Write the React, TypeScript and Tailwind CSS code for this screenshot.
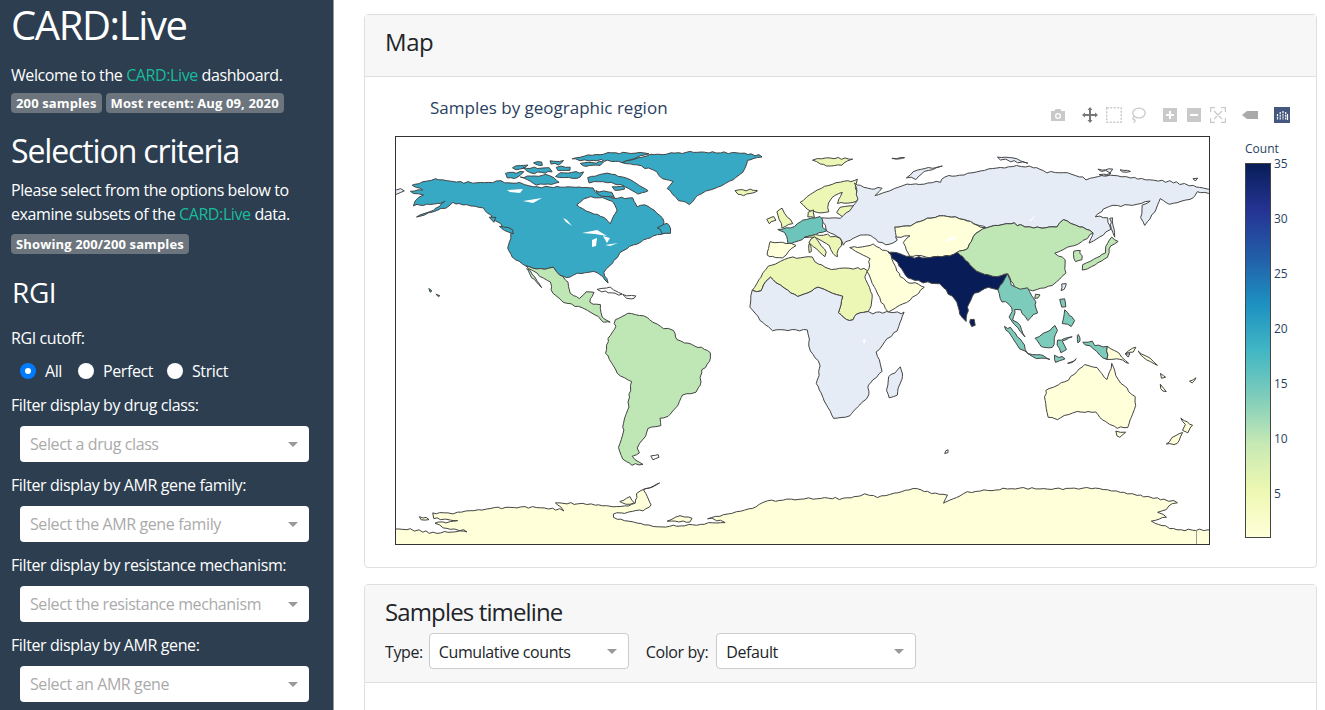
import React from "react";

const USA = "#37a9c5";
const TEAL = "#7ccbbb";
const FRANCE = "#6cc4bb";
const GREEN = "#bfe6b5";
const LIME = "#edf7b5";
const CREAM = "#ffffd9";
const NODATA = "#e5ecf6";
const NAVY = "#081d58";

// map shapes, in page pixels
const land: [string, string][] = [
  [USA, "412,185 423,182 435,179 457,182 480,183 500,181 505,183 520,183 533,187 553,187 575,187 593,188 595,192 603,195 613,198 632,198 637,207 645,204 663,218 664,225 661,229 670,233 657,235 647,238 638,243 630,247 620,252 617,258 607,268 603,272 608,283 603,277 598,272 577,273 570,278 560,275 553,268 537,269 525,266 513,258 508,247 512,230 503,227 493,218 483,208 467,205 453,203 445,208 432,212 417,217 433,210 445,202 427,205 413,205 415,200 423,195 410,192 423,190"],
  [USA, "587,177 607,173 623,177 640,185 649,190 638,194 625,186 607,182 590,182"],
  [USA, "520,177 550,175 560,183 537,185"],
  [USA, "505,173 523,172 518,178 508,178"],
  [USA, "572,158 607,153 648,153 623,162 597,160 580,161"],
  [USA, "580,163 603,162 600,165 582,166"],
  [USA, "512,167 527,165 524,169 516,170"],
  [USA, "523,168 550,168 552,172 530,173"],
  [USA, "557,167 570,167 569,170 558,171"],
  [USA, "560,173 583,172 580,178 572,178 556,177"],
  [USA, "550,161 563,161 562,164 552,164"],
  [USA, "533,162 542,161 543,165 535,165"],
  [USA, "596,191 612,192 615,197 600,196"],
  [USA, "613,187 623,186 624,190 615,190"],
  [USA, "657,227 668,223 671,233 662,233"],
  [USA, "490,217 495,218 493,222"],
  [USA, "500,226 512,229 513,234 505,231"],
  ["#ffffff", "577,205 587,197 602,198 613,201 617,210 612,220 610,224 605,218 590,212"],
  [USA, "623,163 650,155 690,152 740,153 762,156 747,160 743,172 730,182 710,190 697,195 690,204 678,200 668,188 673,182 663,178 653,170 637,165"],
  [USA, "428,289 432,291 430,292"],
  [USA, "436,294 440,296 438,297"],
  [NODATA, "390,188 404,190 398,194 390,194"],
  [LIME, "735,190 757,190 758,192 743,196 737,194"],
  [GREEN, "525,266 537,269 553,268 560,275 568,282 570,293 580,298 587,292 593,292 590,303 600,305 602,317 610,322 603,322 595,315 583,308 563,302 553,293 550,283 537,273"],
  [GREEN, "527,268 542,287 532,277"],
  ["#ffffff", "597,289 610,288 622,295 612,293 601,291"],
  ["#ffffff", "623,295 635,296 635,299 626,298"],
  [GREEN, "608,338 615,330 615,320 628,313 647,317 660,327 673,330 677,340 702,348 711,353 710,362 702,370 700,385 695,392 682,395 678,405 668,417 660,419 661,425 648,428 645,437 640,443 637,448 640,452 633,457 642,464 632,465 622,460 618,447 623,435 623,423 628,410 631,382 618,373 606,353"],
  ["#ffffff", "651,456 658,455 659,458 652,459"],
  [LIME, "776,212 783,208 787,217 793,223 782,227 779,220"],
  [LIME, "767,220 773,216 775,221 769,223"],
  [LIME, "800,202 817,190 840,182 858,180 855,187 859,198 852,203 838,203 843,192 835,195 828,203 828,212 818,213 807,209"],
  [LIME, "840,207 853,205 852,213 843,218 837,212"],
  [LIME, "808,212 813,210 815,217 808,217"],
  [FRANCE, "778,230 795,227 803,220 820,217 823,220 822,228 827,231 815,235 805,237 795,243 788,243 785,232"],
  [CREAM, "770,242 787,243 795,245 788,252 783,258 773,257 767,255 768,248"],
  [LIME, "805,237 815,235 827,235 840,238 842,245 837,250 838,257 833,253 830,245 818,238"],
  [LIME, "815,237 827,252 825,257 820,252 808,242"],
  [LIME, "809,245 811,245 811,252 809,252"],
  [LIME, "752,291 760,277 768,267 788,258 812,257 815,262 828,269 857,268 867,270 865,277 873,298 868,312 857,314 853,320 847,320 838,312 843,297 818,287 798,297 770,278 763,285 760,291"],
  [NODATA, "752,291 760,291 763,285 770,278 798,297 818,287 843,297 838,312 847,320 853,320 857,314 868,312 873,313 887,312 905,313 897,330 885,342 877,353 882,372 868,385 869,395 862,402 850,416 833,418 828,408 817,383 820,365 809,347 808,330 772,330 760,320 750,307"],
  [NODATA, "900,367 903,373 897,395 890,398 887,390 889,377"],
  [CREAM, "850,248 873,245 890,252 895,267 900,277 908,283 915,283 924,288 910,300 888,312 880,298 868,272 870,258"],
  [NODATA, "822,218 840,218 850,210 858,198 855,183 868,189 882,188 875,195 890,190 907,185 940,182 945,177 960,175 973,172 1013,166 1033,167 1047,172 1067,173 1087,179 1110,175 1150,180 1173,182 1208,189 1215,190 1215,194 1208,193 1197,192 1193,198 1170,204 1160,198 1155,212 1145,225 1141,217 1143,205 1150,201 1133,205 1110,206 1095,216 1108,218 1110,230 1100,237 1090,243 1093,232 1083,228 1063,220 1057,227 1033,228 1010,223 987,228 960,218 943,216 927,218 910,225 895,228 900,233 895,237 897,240 890,245 878,242 870,235 860,235 853,238 843,245 840,238 827,232"],
  [CREAM, "895,228 910,225 927,218 943,216 960,218 985,228 975,233 967,248 957,252 950,255 930,258 917,255 910,257 903,243 910,235 897,237"],
  [NAVY, "889,252 900,253 910,257 930,258 950,255 957,252 970,265 980,273 997,277 1008,274 1003,282 997,290 988,287 975,293 968,307 966,321 962,317 955,300 940,284 923,282 907,278 897,263 892,258"],
  [NAVY, "970,319 974,320 975,325 971,326"],
  [GREEN, "957,252 967,248 975,233 987,228 1010,223 1033,228 1057,227 1063,220 1083,228 1093,232 1087,238 1078,245 1067,248 1055,253 1065,260 1065,273 1053,285 1033,290 1017,290 1008,274 997,277 980,273 970,265"],
  [GREEN, "1073,252 1080,250 1082,260 1075,262"],
  [NODATA, "1062,284 1066,283 1064,290 1061,290"],
  [GREEN, "1035,294 1040,294 1038,298 1035,298"],
  [GREEN, "1083,265 1097,258 1105,252 1107,243 1112,238 1118,242 1110,245 1108,257 1095,265 1083,270"],
  [NODATA, "1110,218 1112,218 1115,237 1112,232"],
  [TEAL, "997,290 1003,282 1008,274 1012,285 1020,290 1027,288 1035,302 1037,312 1028,320 1020,310 1015,310 1013,320 1020,325 1025,337 1017,328 1010,318 1012,307 1005,302 1002,303"],
  [TEAL, "1004,327 1010,328 1023,342 1028,353 1020,348 1010,335"],
  [TEAL, "1028,354 1040,355 1050,359 1037,358"],
  [TEAL, "1035,338 1047,332 1055,325 1058,330 1055,338 1052,348 1042,347"],
  [TEAL, "1058,340 1072,337 1063,342 1067,350 1060,352 1058,345"],
  [TEAL, "1060,300 1065,298 1065,307 1062,308"],
  [TEAL, "1065,310 1075,320 1072,327 1063,323"],
  [TEAL, "1077,336 1079,335 1080,341 1078,342"],
  [TEAL, "1083,342 1092,342 1095,345 1107,347 1107,359 1100,355 1093,348 1085,345"],
  [CREAM, "1107,347 1115,350 1122,357 1129,364 1120,359 1112,360 1107,359"],
  [TEAL, "1054,356 1066,358 1056,362"],
  [TEAL, "1068,363 1077,358 1075,362"],
  [CREAM, "1125,353 1136,347 1133,352"],
  [CREAM, "1138,352 1150,358 1157,365 1147,360"],
  [CREAM, "1046,390 1065,382 1077,371 1085,365 1098,368 1107,380 1112,364 1118,380 1135,397 1135,410 1127,427 1117,428 1102,420 1095,412 1077,412 1057,419 1048,417 1045,400"],
  [CREAM, "1116,432 1125,432 1120,438"],
  [CREAM, "1180,418 1193,425 1188,433 1183,430 1185,425"],
  [CREAM, "1183,432 1177,444 1166,444 1175,435"],
  [CREAM, "1160,373 1165,378 1162,378"],
  [CREAM, "1190,381 1196,377 1192,383"],
  [CREAM, "1160,385 1167,391 1163,391"],
  ["#ffffff", "945,450 948,450 948,453 945,453"],
  [LIME, "813,160 830,158 852,159 841,165 827,166"],
  [NODATA, "892,158 905,158 898,160"],
  [NODATA, "907,177 917,170 943,166 925,171 915,179"],
  [NODATA, "997,158 1010,157 1027,163 1010,161"],
  [NODATA, "1098,170 1112,169 1110,172"],
  [NODATA, "1120,170 1130,171 1122,172"],
  [NODATA, "1100,175 1110,173 1108,176"],
  [NODATA, "1193,179 1198,179 1195,181"],
  [CREAM, "390,530 407,529 433,533 467,531 443,528 435,523 458,521 433,518 432,513 457,513 490,508 533,507 563,510 555,503 587,504 617,507 635,504 637,493 660,483 643,490 652,505 643,510 613,514 613,518 657,527 693,525 725,522 708,518 752,508 767,501 800,499 833,498 843,499 865,494 878,497 913,488 932,493 947,495 943,503 967,492 1020,488 1047,489 1095,488 1120,492 1177,502 1158,513 1167,517 1151,522 1177,530 1215,530 1215,552 390,552"],
  [CREAM, "620,502 630,497 635,503 626,504"],
  [CREAM, "667,521 680,516 692,518 690,522"],
  [CREAM, "419,517 426,518 428,520 422,520"],
  [NODATA, "1125,355 1130,354 1128,357"],
];

// lakes and inland seas, no outline
const lakes = [
  "507,190 523,189 520,193 510,192",
  "523,201 542,198 533,203",
  "563,218 567,220 572,226 566,222",
  "582,233 597,230 607,236 595,234",
  "592,240 597,238 596,246 592,247",
  "603,236 610,238 607,243",
  "605,245 618,243 610,246",
  "863,340 866,339 864,345",
  "945,240 955,236 958,237 948,242",
  "1030,222 1037,214 1030,220",
];

// wobble keyed on position, so that neighbours keep a shared border
function wobble(x: number, y: number): [number, number] {
  const dx = Math.sin(x * 1.7 + y * 0.9) * 0.6 + Math.sin(x * 0.6 - y * 1.3) * 0.4;
  const dy = Math.sin(x * 1.1 - y * 1.9) * 0.6 + Math.sin(x * 0.7 + y * 0.5) * 0.4;
  return [x + dx, y + dy];
}

function rough(points: string) {
  const pts = points.split(" ").map((p) => p.split(",").map(Number));
  const out: string[] = [];
  pts.forEach(([x, y], i) => {
    const [nx, ny] = pts[(i + 1) % pts.length];
    const n = Math.max(1, Math.round(Math.hypot(nx - x, ny - y) / 4));
    for (let k = 0; k < n; k++) {
      const [wx, wy] = wobble(x + ((nx - x) * k) / n, y + ((ny - y) * k) / n);
      out.push(`${wx.toFixed(1)},${wy.toFixed(1)}`);
    }
  });
  return out.join(" ");
}

function Caret() {
  return <span className="w-0 h-0 border-x-[5px] border-x-transparent border-t-[5px] border-t-[#999999] shrink-0" />;
}

function Badge({ children }: { children: React.ReactNode }) {
  return (
    <span className="inline-block h-[20px] px-[5px] rounded-[4px] bg-[#6c757d] text-white text-[13px] leading-[20px] font-bold tracking-[0.01em]">
      {children}
    </span>
  );
}

function Dropdown({ label, placeholder }: { label: string; placeholder: string }) {
  return (
    <div>
      <div className="h-[24px] leading-[24px] mt-[11px]">{label}</div>
      <div className="ml-[9px] mt-[9px] w-[289px] h-[36px] flex items-center justify-between bg-white rounded-[4px] pl-[10px] pr-[11px] text-[#aaaaaa]">
        <span>{placeholder}</span>
        <Caret />
      </div>
    </div>
  );
}

function Radio({ label, width, checked }: { label: string; width: string; checked?: boolean }) {
  return (
    <label className={`${width} flex items-center gap-[9px] h-[24px]`}>
      {checked ? (
        <span className="w-[16px] h-[16px] rounded-full bg-[#007bff] flex items-center justify-center">
          <span className="w-[6px] h-[6px] rounded-full bg-white" />
        </span>
      ) : (
        <span className="w-[16px] h-[16px] rounded-full bg-white" />
      )}
      <span>{label}</span>
    </label>
  );
}

function HeaderSelect({ value }: { value: string }) {
  return (
    <div className="w-[200px] h-[36px] flex items-center justify-between bg-white border border-[#cccccc] rounded-[4px] pl-[9px] pr-[11px]">
      <span className="pt-[1px]">{value}</span>
      <Caret />
    </div>
  );
}

function Modebar() {
  const c = "#c9c9c9";
  return (
    <div className="flex items-center mt-[9px] mr-[26px]">
      <svg width="16" height="16" viewBox="0 0 16 16" className="mr-[16px]">
        <path fill={c} fillRule="evenodd" d="M1 4h3.500l1-2h5l1 2H15v10H1zM8 6a3 3 0 1 0 0 6 3 3 0 0 0 0-6z" />
        <circle cx="8" cy="9" r="1.700" fill={c} />
      </svg>
      <svg width="16" height="16" viewBox="0 0 16 16" className="mr-[8px]">
        <path fill="#777777" d="M8 0l2.500 3H9v4h4V5.500L16 8l-3 2.500V9H9v4h1.500L8 16l-2.500-3H7V9H3v1.500L0 8l3-2.500V7h4V3H5.500z" />
      </svg>
      <svg width="16" height="16" viewBox="0 0 16 16" className="mr-[8px]">
        <rect x="0.750" y="0.750" width="14.500" height="14.500" fill="none" stroke={c} strokeWidth="1.500" strokeDasharray="2 1.500" />
      </svg>
      <svg width="16" height="16" viewBox="0 0 16 16" className="mr-[17px]">
        <ellipse cx="9" cy="6" rx="6.200" ry="4.800" fill="none" stroke={c} strokeWidth="1.300" />
        <path fill="none" stroke={c} strokeWidth="1.300" d="M4.500 9.500c-2 1-2 3-.500 3s1.500 2-.500 3" />
      </svg>
      <svg width="14" height="14" viewBox="0 0 14 14" className="mr-[10px]">
        <path fill={c} fillRule="evenodd" d="M0 0h14v14H0zM6 3v3H3v2h3v3h2V8h3V6H8V3z" />
      </svg>
      <svg width="14" height="14" viewBox="0 0 14 14" className="mr-[9px]">
        <path fill={c} fillRule="evenodd" d="M0 0h14v14H0zM3 6v2h8V6z" />
      </svg>
      <svg width="16" height="16" viewBox="0 0 16 16" className="mr-[16px]">
        <path fill="none" stroke={c} strokeWidth="1.200" d="M5 .600H.600V5M11 .600h4.400V5M5 15.400H.600V11M11 15.400h4.400V11M4 4l8 8M12 4l-8 8" />
      </svg>
      <svg width="16" height="10" viewBox="0 0 16 10" className="mr-[16px]">
        <path fill="#aaaaaa" d="M5 1h11v8H5L0 5z" />
      </svg>
      <svg width="16" height="16" viewBox="0 0 16 16">
        <rect width="16" height="16" fill="#44587f" />
        <path stroke="#ffffff" strokeWidth="1.200" d="M3.500 7v6M6.200 5v8M9 4v9M11.700 5v8" strokeDasharray="2 .8" />
        <path stroke="#ffffff" strokeWidth="1.200" d="M13.500 7v6" />
      </svg>
    </div>
  );
}

function Colorbar() {
  const ticks = ["35", "30", "25", "20", "15", "10", "5"];
  return (
    <div className="ml-[35px] mt-[6px] text-[12px] tracking-normal text-[#2a3f5f]">
      <div className="h-[21px] leading-[14px]">Count</div>
      <div className="flex">
        <div className="w-[26px] h-[375px] border border-[#444444] bg-[linear-gradient(to_bottom,#081d58,#253494_12.500%,#225ea8_25%,#1d91c0_37.500%,#41b6c4_50%,#7fcdbb_62.500%,#c7e9b4_75%,#edf8b1_87.500%,#ffffd9)]" />
        <div className="ml-[3px] -mt-[27px]">
          {ticks.map((t) => (
            <div key={t} className="h-[55px] leading-[55px]">{t}</div>
          ))}
        </div>
      </div>
    </div>
  );
}

function WorldMap() {
  return (
    <svg width="815" height="409" viewBox="395 136 815 409" className="shrink-0">
      <rect x="395.500" y="136.500" width="814" height="408" fill="#ffffff" />
      {land.map(([fill, points], i) => (
        <polygon key={i} points={rough(points)} fill={fill} stroke="#444444" strokeWidth="1" strokeLinejoin="round" />
      ))}
      {lakes.map((points, i) => (
        <polygon key={i} points={points} fill="#ffffff" />
      ))}
      <path d="M1196.500 530v14" stroke="#999999" />
      <rect x="395.500" y="136.500" width="814" height="408" fill="none" stroke="#333333" />
    </svg>
  );
}

export default function App() {
  return (
    <div className="h-screen flex overflow-hidden bg-white text-[16px] text-[#212529] font-['Open_Sans',sans-serif] tracking-[-0.025em]">
      <aside className="w-[334px] shrink-0 h-full bg-[#2c3e50] border-r border-[#999999] text-white pl-[11px]">
        <h1 className="text-[40px] leading-[48px] mt-[1px] tracking-[-0.035em]">CARD:Live</h1>
        <p className="mt-[14px] h-[24px] leading-[24px]">
          Welcome to the <span className="text-[#18bc9c]">CARD:Live</span> dashboard.
        </p>
        <div className="flex gap-[4px] mt-[6px]">
          <Badge>200 samples</Badge>
          <Badge>Most recent: Aug 09, 2020</Badge>
        </div>
        <h2 className="text-[32px] leading-[38px] mt-[19px] tracking-[-0.035em]">Selection criteria</h2>
        <p className="mt-[8px] leading-[24px]">
          Please select from the options below to
          <br />
          examine subsets of the <span className="text-[#18bc9c]">CARD:Live</span> data.
        </p>
        <div className="mt-[5px]">
          <Badge>Showing 200/200 samples</Badge>
        </div>
        <h3 className="text-[28px] leading-[34px] mt-[20px] ml-[1px]">RGI</h3>
        <div className="mt-[17px] h-[24px] leading-[24px]">RGI cutoff:</div>
        <div className="flex ml-[9px] mt-[9px] -mb-[1px]">
          <Radio label="All" width="w-[58px]" checked />
          <Radio label="Perfect" width="w-[89px]" />
          <Radio label="Strict" width="w-[80px]" />
        </div>
        <Dropdown label="Filter display by drug class:" placeholder="Select a drug class" />
        <Dropdown label="Filter display by AMR gene family:" placeholder="Select the AMR gene family" />
        <Dropdown label="Filter display by resistance mechanism:" placeholder="Select the resistance mechanism" />
        <Dropdown label="Filter display by AMR gene:" placeholder="Select an AMR gene" />
      </aside>

      <main className="flex-1 min-w-0 pl-[30px] pr-[8px] pt-[14px]">
        <section className="border border-[#dfdfdf] rounded-[4px] h-[554px]">
          <header className="h-[62px] bg-[#f7f7f7] border-b border-[#dfdfdf] pl-[20px] pb-[8px] flex items-center">
            <h4 className="text-[24px]">Map</h4>
          </header>
          <div className="pl-[30px] pt-[21px]">
            <div className="h-[38px] flex justify-between items-start">
              <div className="ml-[35px] text-[17px] leading-[20px] text-[#2a3f5f] tracking-normal">
                Samples by geographic region
              </div>
              <Modebar />
            </div>
            <div className="flex items-start">
              <WorldMap />
              <Colorbar />
            </div>
          </div>
        </section>

        <section className="mt-[16px] border border-[#dfdfdf] rounded-[4px] h-[200px]">
          <header className="h-[98px] bg-[#f7f7f7] border-b border-[#dfdfdf] pl-[20px] pt-[11px]">
            <h4 className="text-[24px] leading-[32px] tracking-[-0.036em]">Samples timeline</h4>
            <div className="flex items-center mt-[5px]">
              <span className="pt-[2px]">Type:</span>
              <div className="ml-[6px]">
                <HeaderSelect value="Cumulative counts" />
              </div>
              <span className="ml-[17px] pt-[2px]">Color by:</span>
              <div className="ml-[8px]">
                <HeaderSelect value="Default" />
              </div>
            </div>
          </header>
        </section>
      </main>
    </div>
  );
}
